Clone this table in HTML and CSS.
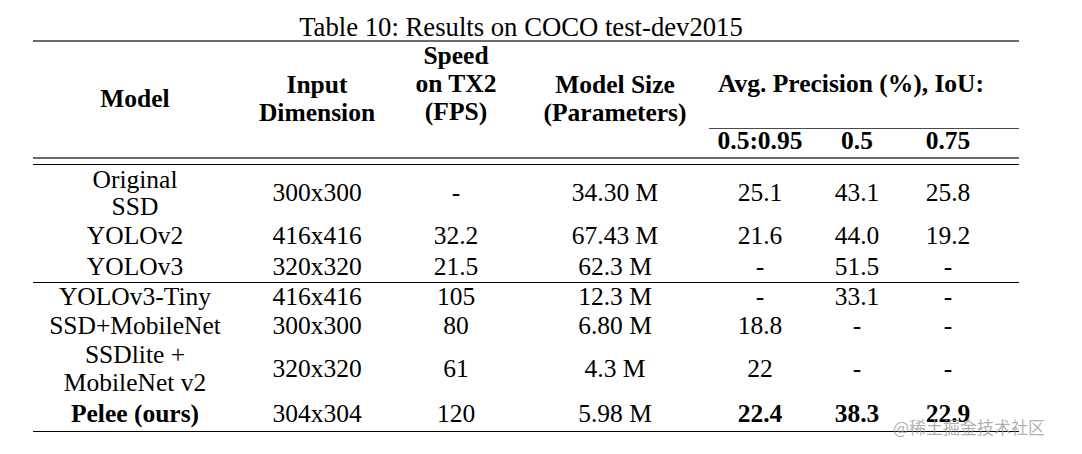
FILE: index.html
```html
<!DOCTYPE html>
<html lang="en">
<head>
<meta charset="utf-8">
<title>Table 10: Results on COCO test-dev2015</title>
<link rel="stylesheet" href="styles.css">
</head>
<body>
<div class="doc">
  <div class="caption">Table 10: Results on COCO test-dev2015</div>
  <div class="tbl">
    <div class="head">
      <div class="hc h-model">Model</div>
      <div class="hc h-input">Input<br>Dimension</div>
      <div class="hc h-speed">Speed<br>on TX2<br>(FPS)</div>
      <div class="hc h-size">Model Size<br>(Parameters)</div>
      <div class="hc h-ap">Avg. Precision (%), IoU:</div>
      <div class="cmid"></div>
      <div class="hc sub s1">0.5:0.95</div>
      <div class="hc sub s2">0.5</div>
      <div class="hc sub s3">0.75</div>
    </div>
    <div class="double"></div>
    <div class="group">
      <div class="row r-ssd">
        <div class="c c1 two">Original<br>SSD</div>
        <div class="c c2">300x300</div>
        <div class="c c3">-</div>
        <div class="c c4">34.30 M</div>
        <div class="c c5">25.1</div>
        <div class="c c6">43.1</div>
        <div class="c c7">25.8</div>
      </div>
      <div class="row r-v2">
        <div class="c c1">YOLOv2</div>
        <div class="c c2">416x416</div>
        <div class="c c3">32.2</div>
        <div class="c c4">67.43 M</div>
        <div class="c c5">21.6</div>
        <div class="c c6">44.0</div>
        <div class="c c7">19.2</div>
      </div>
      <div class="row r-v3">
        <div class="c c1">YOLOv3</div>
        <div class="c c2">320x320</div>
        <div class="c c3">21.5</div>
        <div class="c c4">62.3 M</div>
        <div class="c c5">-</div>
        <div class="c c6">51.5</div>
        <div class="c c7">-</div>
      </div>
    </div>
    <div class="group">
      <div class="row r-tiny">
        <div class="c c1">YOLOv3-Tiny</div>
        <div class="c c2">416x416</div>
        <div class="c c3">105</div>
        <div class="c c4">12.3 M</div>
        <div class="c c5">-</div>
        <div class="c c6">33.1</div>
        <div class="c c7">-</div>
      </div>
      <div class="row r-mob">
        <div class="c c1">SSD+MobileNet</div>
        <div class="c c2">300x300</div>
        <div class="c c3">80</div>
        <div class="c c4">6.80 M</div>
        <div class="c c5">18.8</div>
        <div class="c c6">-</div>
        <div class="c c7">-</div>
      </div>
      <div class="row r-lite">
        <div class="c c1 two2">SSDlite +<br>MobileNet v2</div>
        <div class="c c2">320x320</div>
        <div class="c c3">61</div>
        <div class="c c4">4.3 M</div>
        <div class="c c5">22</div>
        <div class="c c6">-</div>
        <div class="c c7">-</div>
      </div>
      <div class="row r-pelee">
        <div class="c c1 b">Pelee (ours)</div>
        <div class="c c2">304x304</div>
        <div class="c c3">120</div>
        <div class="c c4">5.98 M</div>
        <div class="c c5 b">22.4</div>
        <div class="c c6 b">38.3</div>
        <div class="c c7 b">22.9</div>
      </div>
    </div>
  </div>
  <div class="watermark">@稀土掘金技术社区</div>
</div>
</body>
</html>
```

FILE: styles.css
```css
html, body {
  margin: 0;
  padding: 0;
  background: #ffffff;
}

.doc {
  position: relative;
  width: 1082px;
  height: 454px;
  font-family: "Liberation Serif", "Times New Roman", serif;
  color: #000000;
  padding-top: 15px;
  box-sizing: border-box;
}

.caption {
  font-size: 26.7px;
  line-height: 25px;
  height: 25px;
  text-align: center;
  padding-right: 40px;
}

.tbl {
  margin-left: 33px;
  width: 986px;
  border-top: 2px solid #6b6b6b;
  font-size: 25.5px;
}

.head,
.row {
  display: grid;
  grid-template-columns: 204px 160px 118px 194px 102px 92px 116px;
}

.head {
  grid-template-rows: 86px 1px 28px;
  font-weight: bold;
  line-height: 28px;
}

.hc {
  display: flex;
  align-items: center;
  justify-content: center;
  text-align: center;
}

.h-model { grid-row: 1 / 4; grid-column: 1; padding-bottom: 2px; }
.h-input { grid-row: 1 / 4; grid-column: 2; padding-bottom: 2px; }
.h-speed { grid-row: 1; grid-column: 3; padding-bottom: 2px; }
.h-size { grid-row: 1 / 4; grid-column: 4; padding-left: 6px; padding-bottom: 2px; }
.h-ap { grid-row: 1; grid-column: 5 / 8; padding-right: 26px; padding-bottom: 2px; }
.cmid { grid-row: 2; grid-column: 5 / 8; background: #4a4a4a; }
.sub { grid-row: 3; padding-bottom: 4px; }
.s1 { grid-column: 5; }
.s2 { grid-column: 6; }
.s3 { grid-column: 7; padding-right: 26px; }

.double {
  height: 5px;
  border-top: 2px solid #6b6b6b;
  border-bottom: 1px solid #000000;
}

.group {
  border-bottom: 1px solid #000000;
}

.row {
  line-height: 28px;
  align-items: center;
}

.c {
  text-align: center;
}

.c4 { padding-left: 6px; }
.c7 { padding-right: 26px; }

.two { line-height: 27px; }
.two2 { line-height: 28px; }

.b { font-weight: bold; }

.r-ssd { height: 55px; }
.r-v2 { height: 32px; }
.r-v3 { height: 30px; }
.r-tiny { height: 28px; }
.r-mob { height: 29px; }
.r-lite { height: 57px; }
.r-pelee { height: 34px; }

.watermark {
  position: absolute;
  left: 893px;
  top: 415px;
  font-family: "Noto Sans CJK SC", "Noto Sans", sans-serif;
  font-size: 17px;
  line-height: 24px;
  color: rgba(150, 150, 150, 0.75);
  white-space: nowrap;
}
```
